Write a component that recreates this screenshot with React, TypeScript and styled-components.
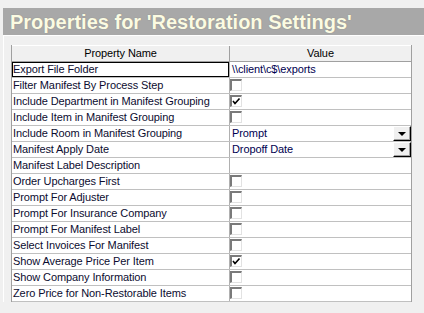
import React from "react";
import styled, { createGlobalStyle } from "styled-components";

const GlobalStyle = createGlobalStyle`
  html, body {
    margin: 0;
    padding: 0;
    background: #f0f0f0;
  }
  body {
    font-family: "Liberation Sans", Arial, sans-serif;
  }
`;

const Window = styled.div`
  width: 424px;
  height: 313px;
  overflow: hidden;
  padding-top: 8px;
  box-sizing: border-box;
  background: #f0f0f0;
`;

const TitleBar = styled.div`
  margin-left: 3px;
  height: 27px;
  background: #a8a8a8;
  display: flex;
  align-items: center;
  padding-left: 7px;
`;

const Title = styled.h1`
  margin: 0;
  font-family: "Liberation Sans", Arial, sans-serif;
  font-weight: 700;
  font-size: 20px;
  line-height: 1;
  color: #fbfbe2;
  text-shadow: 0 0 1px rgba(60, 60, 40, 0.35);
  white-space: nowrap;
`;

const Panel = styled.div`
  margin-left: 3px;
  border-top: 1px solid #ffffff;
  border-left: 1px solid #ffffff;
  padding: 9px 0 0 7px;
`;

const Grid = styled.div`
  width: 401px;
  box-sizing: border-box;
  border-left: 1px solid #a0a0a0;
  border-right: 1px solid #a0a0a0;
  font-size: 11px;
  letter-spacing: -0.1px;
`;

const HeaderRow = styled.div`
  display: grid;
  grid-template-columns: 218px 1fr;
  height: 15px;
  border-top: 1px solid #ffffff;
  border-bottom: 1px solid #a0a0a0;
  background: #f0f0f0;
  box-sizing: content-box;
`;

const HeaderCell = styled.div<{ $last?: boolean }>`
  text-align: center;
  line-height: 15px;
  color: #000;
  border-right: ${(p) => (p.$last ? "none" : "1px solid #a0a0a0")};
`;

const Row = styled.div`
  display: grid;
  grid-template-columns: 218px 1fr;
  height: 15px;
  border-bottom: 1px solid #c0c0c0;
  background: #ffffff;
  box-sizing: content-box;
`;

const NameCell = styled.div<{ $focused?: boolean }>`
  position: relative;
  border-right: 1px solid #b0b0b0;
  padding-left: 1px;
  line-height: 15px;
  color: #0c0c30;
  white-space: nowrap;
  overflow: hidden;
  ${(p) =>
    p.$focused &&
    `
    &::after {
      content: "";
      position: absolute;
      left: -1px;
      top: -1px;
      right: -1px;
      bottom: -1px;
      border: 2px solid #000;
    }
  `}
`;

const ValueCell = styled.div`
  position: relative;
  display: flex;
  align-items: center;
  line-height: 15px;
  padding-left: 2px;
  color: #000050;
  white-space: nowrap;
`;

const CheckBox = styled.span<{ $checked?: boolean }>`
  position: relative;
  margin-left: -2px;
  width: 12px;
  height: 12px;
  box-sizing: border-box;
  background: #ffffff;
  border-top: 2px solid #7a7a7a;
  border-left: 2px solid #7a7a7a;
  border-right: 1px solid #e2e2e2;
  border-bottom: 1px solid #e2e2e2;
  align-self: flex-start;
  margin-top: 1px;
`;

const Tick = styled.svg`
  position: absolute;
  left: 0;
  top: 0;
`;

const DropButton = styled.span`
  position: absolute;
  right: 0;
  top: 0;
  width: 18px;
  height: 15px;
  box-sizing: border-box;
  background: #f0f0f0;
  border-top: 1px solid #ffffff;
  border-left: 1px solid #ffffff;
  border-right: 1px solid #000;
  border-bottom: 1px solid #000;
  box-shadow: inset -1px -1px 0 #a0a0a0;
  display: flex;
  align-items: center;
  justify-content: center;
`;

const Arrow = styled.span`
  width: 0;
  height: 0;
  border-left: 4px solid transparent;
  border-right: 4px solid transparent;
  border-top: 4px solid #000;
  margin-top: 1px;
`;

type Prop =
  | { name: string; kind: "text"; value: string }
  | { name: string; kind: "check"; checked: boolean }
  | { name: string; kind: "select"; value: string };

const props: Prop[] = [
  { name: "Export File Folder", kind: "text", value: "\\\\client\\c$\\exports" },
  { name: "Filter Manifest By Process Step", kind: "check", checked: false },
  { name: "Include Department in Manifest Grouping", kind: "check", checked: true },
  { name: "Include Item in Manifest Grouping", kind: "check", checked: false },
  { name: "Include Room in Manifest Grouping", kind: "select", value: "Prompt" },
  { name: "Manifest Apply Date", kind: "select", value: "Dropoff Date" },
  { name: "Manifest Label Description", kind: "text", value: "" },
  { name: "Order Upcharges First", kind: "check", checked: false },
  { name: "Prompt For Adjuster", kind: "check", checked: false },
  { name: "Prompt For Insurance Company", kind: "check", checked: false },
  { name: "Prompt For Manifest Label", kind: "check", checked: false },
  { name: "Select Invoices For Manifest", kind: "check", checked: false },
  { name: "Show Average Price Per Item", kind: "check", checked: true },
  { name: "Show Company Information", kind: "check", checked: false },
  { name: "Zero Price for Non-Restorable Items", kind: "check", checked: false },
];

const Value: React.FC<{ p: Prop }> = ({ p }) => {
  if (p.kind === "check") {
    return (
      <CheckBox $checked={p.checked}>
        {p.checked && (
          <Tick width="9" height="9" viewBox="0 0 9 9">
            <path d="M1 4 L3 6.5 L7.5 1.5" stroke="#000" strokeWidth="1.6" fill="none" />
          </Tick>
        )}
      </CheckBox>
    );
  }
  if (p.kind === "select") {
    return (
      <>
        {p.value}
        <DropButton>
          <Arrow />
        </DropButton>
      </>
    );
  }
  return <>{p.value}</>;
};

export default function App() {
  return (
    <Window>
      <GlobalStyle />
      <TitleBar>
        <Title>Properties for 'Restoration Settings'</Title>
      </TitleBar>
      <Panel>
        <Grid>
          <HeaderRow>
            <HeaderCell>Property Name</HeaderCell>
            <HeaderCell $last>Value</HeaderCell>
          </HeaderRow>
          {props.map((p, i) => (
            <Row key={p.name}>
              <NameCell $focused={i === 0}>{p.name}</NameCell>
              <ValueCell>
                <Value p={p} />
              </ValueCell>
            </Row>
          ))}
        </Grid>
      </Panel>
    </Window>
  );
}
